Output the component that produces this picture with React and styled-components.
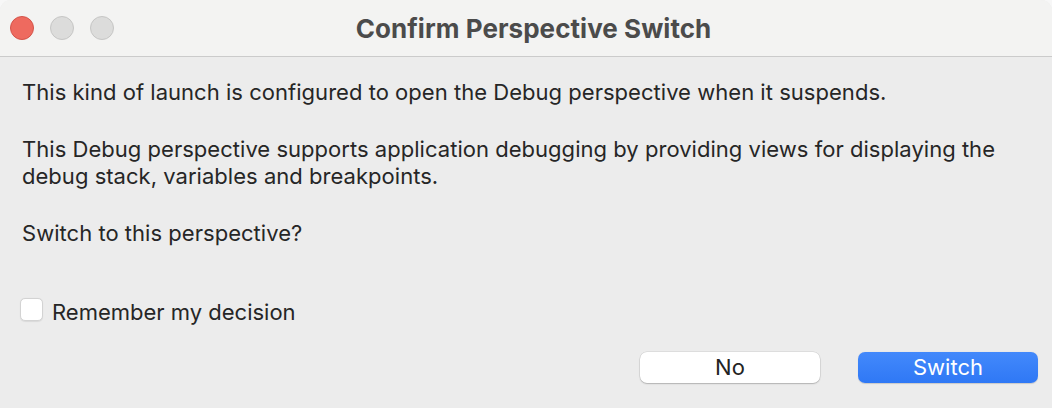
import React from "react";
import styled, { createGlobalStyle } from "styled-components";

const Global = createGlobalStyle`
  html, body { margin: 0; padding: 0; background: #f7f7f7; }
  body { font-family: Inter, "Noto Sans", "Liberation Sans", sans-serif; -webkit-font-smoothing: antialiased; }
`;

const Window = styled.div`
  width: 1052px;
  height: 408px;
  background: #ececec;
  border-top-left-radius: 11px;
  border-top-right-radius: 11px;
  overflow: hidden;
  display: flex;
  flex-direction: column;
`;

const TitleBar = styled.div`
  height: 56px;
  flex: none;
  background: #f3f3f2;
  border-bottom: 1px solid #cbcbcb;
  display: grid;
  grid-template-columns: 1fr auto 1fr;
  align-items: center;
`;

const Lights = styled.div`
  display: flex;
  gap: 16px;
  padding-left: 10px;
`;

const Light = styled.span`
  width: 24px;
  height: 24px;
  border-radius: 50%;
  box-sizing: border-box;
  background: ${(p) => (p.$red ? "#ee6a5f" : "#dcdcdb")};
  border: 1px solid ${(p) => (p.$red ? "#d4544a" : "#c6c6c5")};
`;

const Title = styled.h1`
  margin: 0 0 0 15px;
  font-size: 26px;
  font-weight: 700;
  color: #4b4b4b;
  letter-spacing: 0.05px;
`;

const Body = styled.div`
  flex: 1;
  display: flex;
  flex-direction: column;
  padding: 22px 22px 0 22px;
`;

const Para = styled.p`
  margin: 0 0 30px 0;
  font-size: 22px;
  line-height: 27px;
  color: #262626;
  letter-spacing: 0.03px;
  white-space: nowrap;
`;

const CheckRow = styled.label`
  display: flex;
  align-items: flex-start;
  gap: 9px;
  margin-top: 22px;
  margin-left: -2px;
  font-size: 22px;
  line-height: 27px;
  color: #262626;
`;

const Box = styled.span`
  width: 23px;
  height: 23px;
  margin-top: -1px;
  box-sizing: border-box;
  border-radius: 5px;
  background: #ffffff;
  border: 1px solid #d3d3d3;
  box-shadow: 0 0.5px 1px rgba(0,0,0,0.08);
`;

const Buttons = styled.div`
  display: flex;
  justify-content: flex-end;
  gap: 38px;
  margin-top: 26px;
  margin-right: -8px;
`;

const Button = styled.button`
  width: 180px;
  height: 31px;
  border-radius: 7px;
  font-family: inherit;
  font-size: 22px;
  line-height: 31px;
  padding: 0;
  border: none;
  color: ${(p) => (p.$primary ? "#ffffff" : "#232323")};
  background: ${(p) => (p.$primary ? "linear-gradient(#4389fb, #2f78f5)" : "#ffffff")};
  box-shadow: ${(p) =>
    p.$primary
      ? "0 0.5px 1px rgba(0,0,0,0.15)"
      : "0 0 0 0.5px rgba(0,0,0,0.12), 0 1px 1.5px rgba(0,0,0,0.2)"};
`;

export default function App() {
  return (
    <>
      <Global />
      <Window>
        <TitleBar>
          <Lights>
            <Light $red />
            <Light />
            <Light />
          </Lights>
          <Title>Confirm Perspective Switch</Title>
          <div />
        </TitleBar>
        <Body>
          <Para>This kind of launch is configured to open the Debug perspective when it suspends.</Para>
          <Para>
            This Debug perspective supports application debugging by providing views for displaying the
            <br />
            debug stack, variables and breakpoints.
          </Para>
          <Para>Switch to this perspective?</Para>
          <CheckRow>
            <Box />
            Remember my decision
          </CheckRow>
          <Buttons>
            <Button>No</Button>
            <Button $primary>Switch</Button>
          </Buttons>
        </Body>
      </Window>
    </>
  );
}
